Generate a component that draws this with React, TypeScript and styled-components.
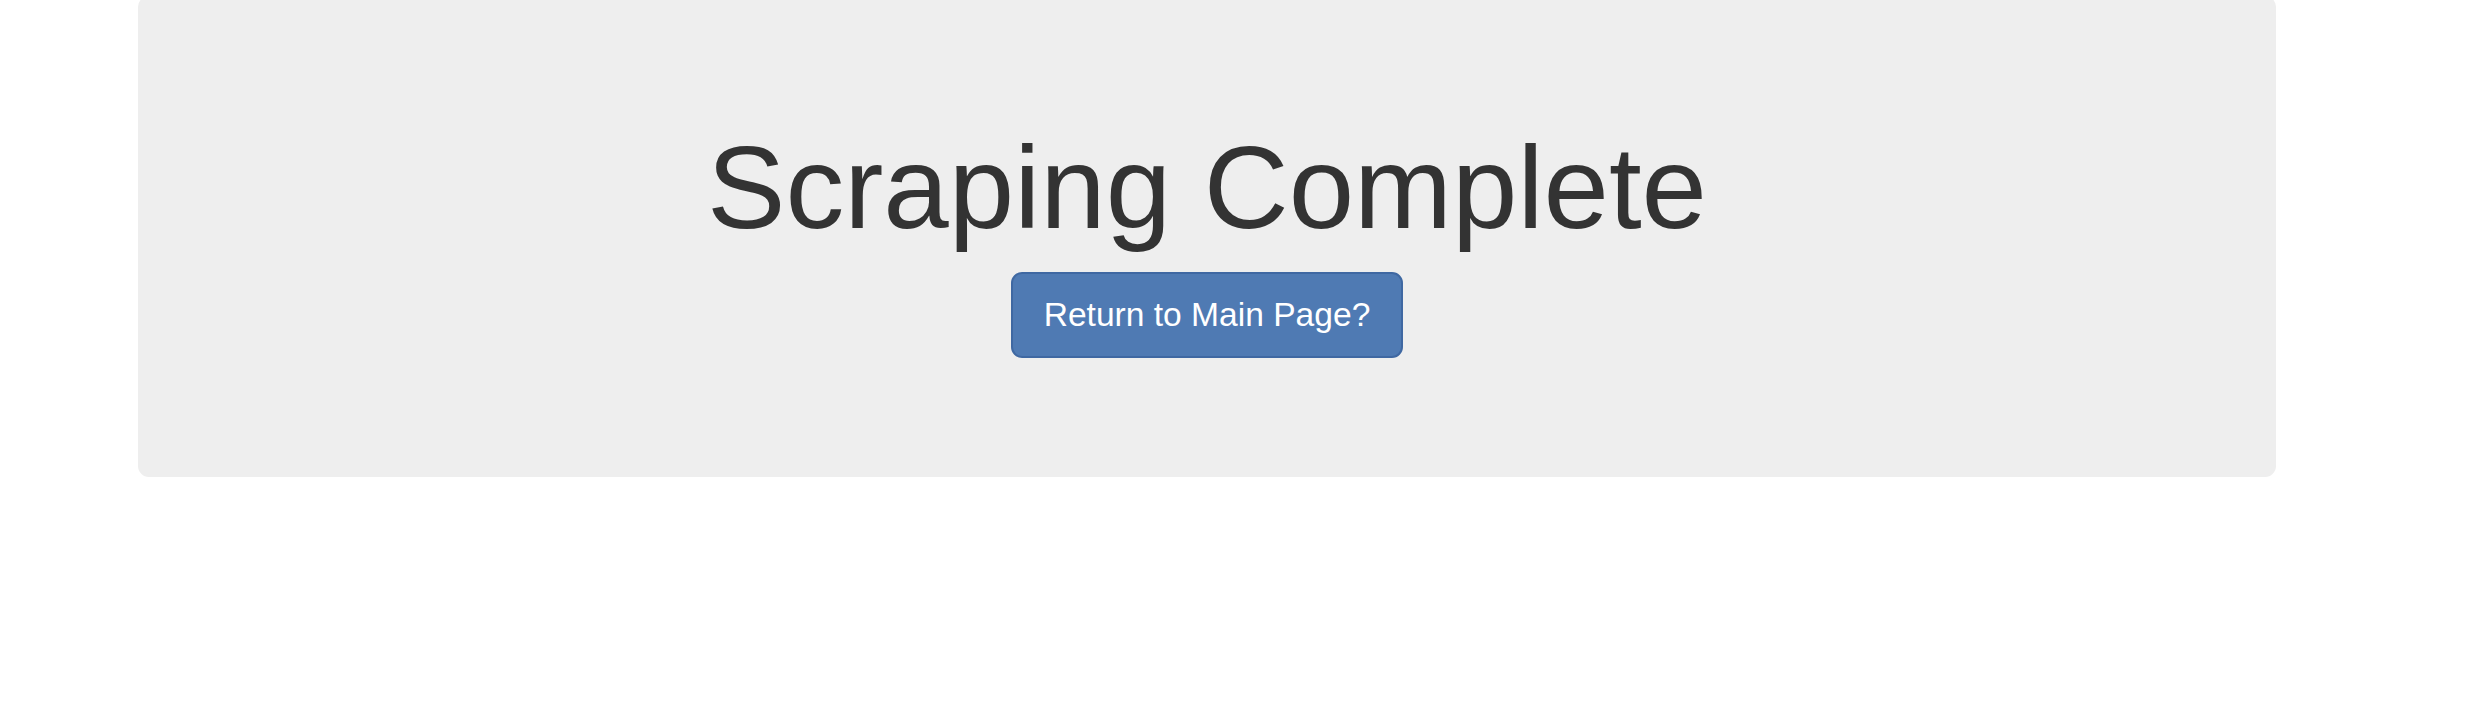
import React from "react";
import styled, { createGlobalStyle } from "styled-components";

const GlobalStyle = createGlobalStyle`
  html, body {
    margin: 0;
    padding: 0;
    background: #ffffff;
    font-family: "Liberation Sans", Arial, Helvetica, sans-serif;
    color: #333333;
  }
  * { box-sizing: border-box; }
`;

const Page = styled.div`
  width: 2476px;
  height: 702px;
  overflow: hidden;
  padding: 0 200px 0 138px;
`;

const Jumbotron = styled.div`
  margin-top: -4px;
  background: #eeeeee;
  border-radius: 11px;
  padding: 90px 56px 90px;
  display: flex;
  flex-direction: column;
  align-items: center;
  text-align: center;
`;

const Title = styled.h1`
  margin: 37px 0 20px;
  font-size: 117.6px;
  line-height: 1.1;
  font-weight: 500;
  color: #333333;
`;

const Actions = styled.p`
  margin: 0 0 29px;
`;

const PrimaryButton = styled.button`
  font-family: "Liberation Sans", Arial, Helvetica, sans-serif;
  font-size: 33.6px;
  line-height: 1.3333;
  padding: 18.7px 30px;
  color: #ffffff;
  background: #4f7ab3;
  border: 2px solid #3f68a2;
  border-radius: 11px;
  cursor: pointer;
  width: 392px;
  height: 86px;
`;

export default function App() {
  return (
    <>
      <GlobalStyle />
      <Page>
        <Jumbotron>
          <Title>Scraping Complete</Title>
          <Actions>
            <PrimaryButton>Return to Main Page?</PrimaryButton>
          </Actions>
        </Jumbotron>
      </Page>
    </>
  );
}
